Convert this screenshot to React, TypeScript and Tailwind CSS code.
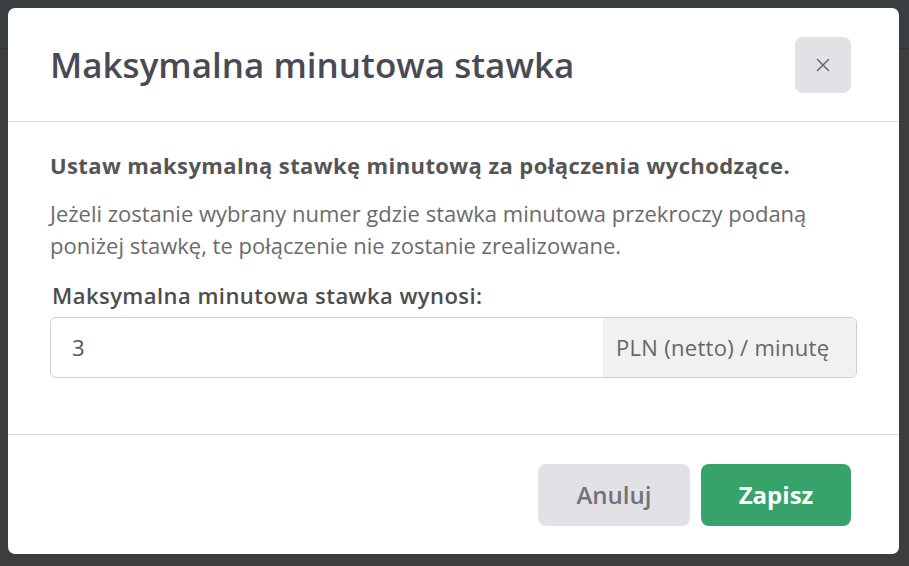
import React from "react";

export default function App() {
  return (
    <div className="relative w-[909px] h-[566px] bg-[#3d3d3d] overflow-hidden" style={{ fontFamily: '"Open Sans", "Noto Sans", sans-serif' }}>
      <div className="h-[49px] bg-[#393e41] border-b border-[#2f3336]" />
      <div className="absolute left-[8px] top-[8px] w-[891px] h-[546px] bg-white rounded-[7px] flex flex-col">
        <div className="h-[114px] flex items-center justify-between pl-[42px] pr-[48px] border-b border-[#dcdcdc]">
          <h1 className="text-[35px] font-semibold text-[#4a4a55] leading-none">Maksymalna minutowa stawka</h1>
          <button className="w-[56px] h-[56px] rounded-[8px] bg-[#e2e1e6] flex items-center justify-center text-[#6b6b75]">
            <svg width="14" height="14" viewBox="0 0 14 14" fill="none" stroke="currentColor" strokeWidth="1.6" strokeLinecap="round">
              <path d="M1.5 1.5 L12.5 12.5 M12.5 1.5 L1.5 12.5" />
            </svg>
          </button>
        </div>
        <div className="flex-1 px-[42px] pt-[27px] border-b border-[#dcdcdc]">
          <p className="text-[22px] font-bold tracking-[0.4px] text-[#555555] leading-[32px]">Ustaw maksymalną stawkę minutową za połączenia wychodzące.</p>
          <p className="mt-[16px] text-[22px] text-[#6b6b6b] leading-[32px]">Jeżeli zostanie wybrany numer gdzie stawka minutowa przekroczy podaną poniżej stawkę, te połączenie nie zostanie zrealizowane.</p>
          <label className="block mt-[18px] ml-[2px] text-[22px] font-semibold tracking-[0.45px] text-[#4d4d4d] leading-[32px]">Maksymalna minutowa stawka wynosi:</label>
          <div className="mt-[6px] flex h-[61px] border border-[#cfcfcf] rounded-[6px] overflow-hidden">
            <div className="flex-1 flex items-center pl-[21px] text-[22px] text-[#555555]">3</div>
            <div className="w-[253px] bg-[#f1f1f1] flex items-center pl-[13px] text-[22px] tracking-[0.3px] text-[#666666]">PLN (netto) / minutę</div>
          </div>
        </div>
        <div className="h-[119px] flex items-center justify-end gap-[11px] pr-[48px]">
          <button className="w-[152px] h-[62px] rounded-[8px] bg-[#e2e1e6] text-[24px] font-semibold text-[#727279]">Anuluj</button>
          <button className="w-[150px] h-[62px] rounded-[8px] bg-[#37a26a] text-[24px] font-bold text-white">Zapisz</button>
        </div>
      </div>
    </div>
  );
}
